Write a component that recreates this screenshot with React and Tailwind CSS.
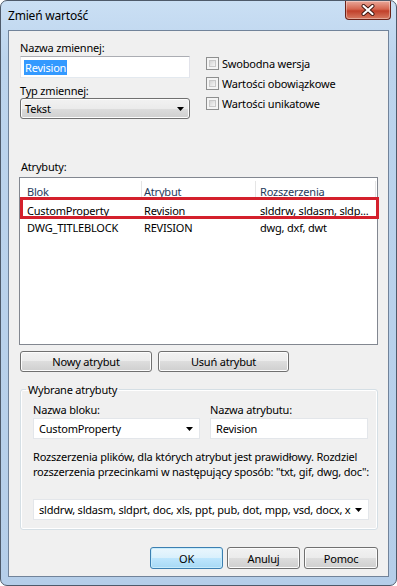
import React from 'react';

const btn =
  'h-[21px] rounded-[3px] border border-[#707070] bg-[linear-gradient(#f2f2f2,#ebebeb_50%,#dddddd_50%,#cfcfcf)] shadow-[inset_0_0_0_1px_#fcfcfc] flex items-center justify-center text-black';

function Arrow() {
  return (
    <svg width="7" height="4" viewBox="0 0 7 4">
      <path d="M0 0h7L3.5 4z" fill="#000" />
    </svg>
  );
}

function CheckRow({ label }) {
  return (
    <div className="h-[20px] flex items-center gap-[2px]">
      <span className="w-[13px] h-[13px] border border-[#8e8f8f] bg-[#f4f4f4] p-[2px]">
        <span className="block w-full h-full border border-[#c8c8c8] bg-[linear-gradient(135deg,#d4d4d4,#f5f5f5)]" />
      </span>
      <span className="ml-[1px]">{label}</span>
    </div>
  );
}

const columns = [
  { w: 'w-[122px]', pad: 'pl-[7px]' },
  { w: 'w-[114px]', pad: 'pl-[2px]' },
  { w: 'w-[120px]', pad: 'pl-[4px]' },
];

const rows = [
  ['CustomProperty', 'Revision', 'slddrw, sldasm, sldp...'],
  ['DWG_TITLEBLOCK', 'REVISION', 'dwg, dxf, dwt'],
];

export default function App() {
  return (
    <div className="w-[397px] h-[586px] rounded-[7px] border border-[#4e5a6a] bg-[linear-gradient(#cadff4,#bcd4ed_10%,#b5cee9)] flex flex-col font-['Noto_Sans',sans-serif] text-[11px] tracking-[-0.2px] leading-[15px] text-black overflow-hidden">
      {/* title bar */}
      <div className="h-[29px] flex items-start shrink-0">
        <span className="ml-[7px] mt-[7px] text-[12px] text-[#000]">Zmień wartość</span>
        <div className="ml-auto mr-[5px] w-[46px] h-[19px] rounded-b-[4px] border border-t-0 border-[#6b2218] bg-[linear-gradient(#e9a89a,#d56650_45%,#c1402a_55%,#d77b62)] shadow-[inset_0_0_0_1px_rgba(255,255,255,0.35)] flex items-center justify-center">
          <svg width="14" height="12" viewBox="0 0 14 12">
            <path d="M2.5 2l9 8M11.5 2l-9 8" stroke="#3b1510" strokeWidth="4" strokeLinecap="round" />
            <path d="M2.5 2l9 8M11.5 2l-9 8" stroke="#fff" strokeWidth="2.2" strokeLinecap="round" />
          </svg>
        </div>
      </div>

      {/* client area */}
      <div className="mx-[7px] mb-[8px] flex-1 min-w-0 border border-[#71839a] bg-[#f0f0f0] flex flex-col pl-[11px] pr-[10px]">
        <div className="flex">
          <div className="w-[170px] pt-[9px] flex flex-col">
            <span>Nazwa zmiennej:</span>
            <div className="mt-[1px] h-[22px] border border-[#abadb3] border-l-[#e2e3ea] border-r-[#e2e3ea] border-b-[#e3e9ef] bg-white flex items-center pl-[3px]">
              <span className="bg-[#3399ff] text-white px-[1px]">Revision</span>
            </div>
            <span className="mt-[5px]">Typ zmiennej:</span>
            <div className="h-[21px] rounded-[3px] border border-[#707070] bg-[linear-gradient(#f2f2f2,#ebebeb_50%,#dddddd_50%,#cfcfcf)] shadow-[inset_0_0_0_1px_#fcfcfc] flex items-center justify-between pl-[4px] pr-[5px]">
              <span>Tekst</span>
              <Arrow />
            </div>
          </div>
          <div className="ml-[16px] pt-[22px] flex flex-col">
            <CheckRow label="Swobodna wersja" />
            <CheckRow label="Wartości obowiązkowe" />
            <CheckRow label="Wartości unikatowe" />
          </div>
        </div>

        <span className="mt-[40px] ml-[1px]">Atrybuty:</span>
        <div className="mt-[3px] -ml-px h-[168px] border border-[#828790] bg-white flex flex-col">
          <div className="h-[24px] flex shrink-0">
            {['Blok', 'Atrybut', 'Rozszerzenia'].map((h, i) => (
              <div key={h} className={`${columns[i].w} ${columns[i].pad} h-[18px] border-r border-[#e5e5e5] flex items-end translate-y-[3px]`}>
                <span className="text-[#1e395b]">{h}</span>
              </div>
            ))}
          </div>
          {rows.map((r, ri) => (
            <div key={ri} className="h-[17px] flex items-center relative">
              {r.map((c, ci) => (
                <span key={ci} className={`${columns[ci].w} ${columns[ci].pad} whitespace-nowrap`}>
                  {c}
                </span>
              ))}
              {ri === 0 && (
                <span className="absolute left-0 right-[-2px] top-[-5px] bottom-0 border-[3px] border-[#d4202c]" />
              )}
            </div>
          ))}
        </div>

        <div className="mt-[6px] flex gap-[6px]">
          <div className={`${btn} w-[132px] h-[20px]`}>Nowy atrybut</div>
          <div className={`${btn} w-[131px] h-[20px]`}>Usuń atrybut</div>
        </div>

        <fieldset className="mt-[10px] min-w-0 border border-[#d5dfe5] rounded-[3px] pl-[12px] pr-[8px] pb-[9px] shadow-[inset_0_0_0_1px_#fff]">
          <legend className="-ml-[7px] px-[2px]">Wybrane atrybuty</legend>
          <div className="mt-[5px] flex gap-[10px]">
            <div className="w-[167px] flex flex-col">
              <span>Nazwa bloku:</span>
              <div className="mt-[1px] h-[21px] border border-[#e3e6ea] bg-white flex items-center justify-between pl-[5px] pr-[6px]">
                <span>CustomProperty</span>
                <Arrow />
              </div>
            </div>
            <div className="w-[158px] flex flex-col">
              <span>Nazwa atrybutu:</span>
              <div className="mt-[1px] h-[21px] border border-[#e3e6ea] bg-white flex items-center pl-[5px]">
                <span>Revision</span>
              </div>
            </div>
          </div>
          <p className="mt-[10px] -mr-[4px]">
            Rozszerzenia plików, dla których atrybut jest prawidłowy. Rozdziel rozszerzenia przecinkami w następujący sposób: "txt, gif, dwg, doc":
          </p>
          <div className="mt-[20px] h-[21px] border border-[#e3e6ea] bg-white flex items-center pl-[5px] pr-[6px] gap-[4px]">
            <span className="flex-1 min-w-0 whitespace-nowrap overflow-hidden">
              slddrw, sldasm, sldprt, doc, xls, ppt, pub, dot, mpp, vsd, docx, xlsx, pptx
            </span>
            <Arrow />
          </div>
        </fieldset>

        <div className="mt-[17px] flex justify-end gap-[4px]">
          <div className="h-[22px] w-[73px] rounded-[3px] border border-[#3c7fb1] bg-[linear-gradient(#eaf6fd,#d9f0fc_50%,#bee6fd_50%,#a7d9f5)] shadow-[inset_0_0_0_1px_#c7ecfc] flex items-center justify-center">OK</div>
          <div className={`${btn} h-[22px] w-[73px]`}>Anuluj</div>
          <div className={`${btn} h-[22px] w-[74px]`}>Pomoc</div>
        </div>
      </div>
    </div>
  );
}
